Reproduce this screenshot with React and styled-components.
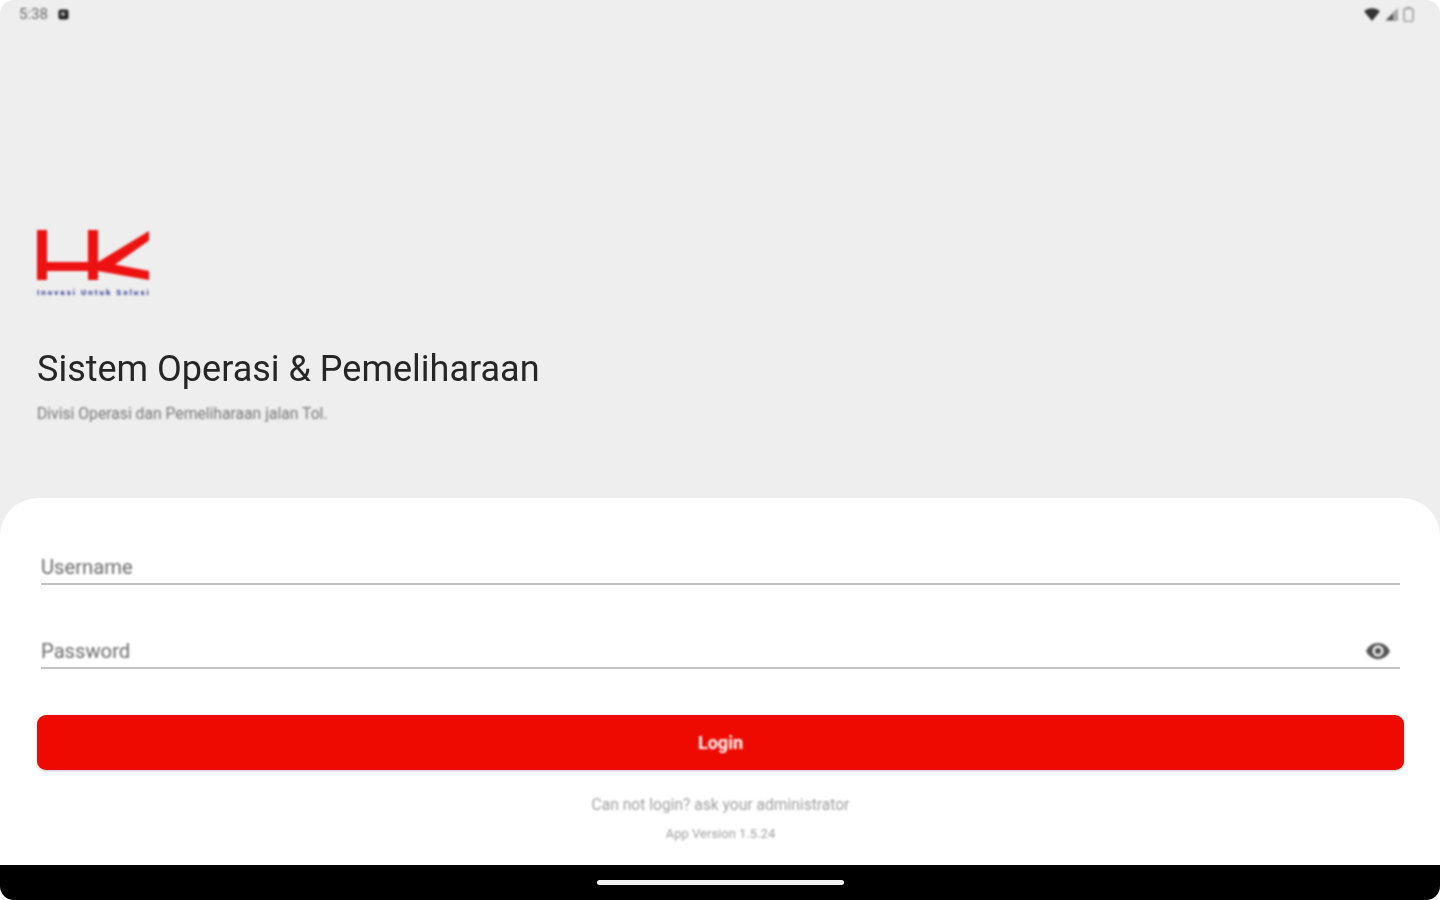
import * as React from "react";
import styled, { createGlobalStyle } from "styled-components";

const GlobalStyle = createGlobalStyle`
  html, body {
    margin: 0;
    padding: 0;
    background: #ffffff;
  }
`;

const Screen = styled.div`
  width: 1440px;
  height: 900px;
  display: flex;
  flex-direction: column;
  overflow: hidden;
  border-radius: 14px;
  background: #eeeeee;
  font-family: Roboto, "Liberation Sans", sans-serif;
`;

const StatusBar = styled.div`
  height: 28px;
  flex-shrink: 0;
  display: flex;
  align-items: center;
  justify-content: space-between;
  padding: 0 26px 0 19px;
  filter: blur(0.8px);
`;

const StatusGroup = styled.div`
  display: flex;
  align-items: center;
  gap: ${({ gap }) => gap}px;
`;

const Clock = styled.span`
  font-size: 15px;
  color: #666666;
`;

const Header = styled.header`
  flex: 1;
  display: flex;
  flex-direction: column;
  align-items: flex-start;
  padding: 201px 37px 0;
`;

const Logo = styled.div`
  width: 114px;
  display: flex;
  flex-direction: column;
  filter: blur(0.8px);
`;

const Tagline = styled.span`
  margin-top: 7px;
  font-size: 8px;
  line-height: 10px;
  font-weight: 700;
  letter-spacing: 2.02px;
  white-space: nowrap;
  color: #2a2f8f;
`;

const Title = styled.h1`
  margin: 50px 0 0;
  font-size: 36px;
  line-height: 42px;
  font-weight: 400;
  color: #262626;
  filter: blur(0.7px);
`;

const Subtitle = styled.p`
  margin: 15px 0 0;
  font-size: 15.7px;
  line-height: 18px;
  color: #777777;
  filter: blur(0.8px);
`;

const Sheet = styled.main`
  height: 367px;
  flex-shrink: 0;
  box-sizing: border-box;
  display: flex;
  flex-direction: column;
  padding: 43px 36px 0 37px;
  background: #ffffff;
  border-radius: 38px 38px 0 0;
`;

const Field = styled.div`
  height: 44px;
  margin: 0 4px ${({ last }) => (last ? 46 : 40)}px;
  box-sizing: border-box;
  display: flex;
  align-items: flex-end;
  justify-content: space-between;
  padding: 0 9px 4px 0;
  border-bottom: 2px solid #c4c4c4;
`;

const FieldLabel = styled.span`
  font-size: 20.2px;
  line-height: 24px;
  color: #6a6a6a;
  filter: blur(0.8px);
`;

const EyeIcon = styled.svg`
  width: 26px;
  height: 26px;
  margin-bottom: -1px;
  fill: #555555;
  filter: blur(0.8px);
`;

const LoginButton = styled.button`
  height: 55px;
  flex-shrink: 0;
  border: 0;
  border-radius: 9px;
  background: #ee0a00;
  color: #ffffff;
  font-family: inherit;
  font-size: 18px;
  font-weight: 700;
  box-shadow: 0 1px 3px rgba(0, 0, 0, 0.25);
`;

const ButtonText = styled.span`
  display: block;
  filter: blur(0.8px);
`;

const Note = styled.p`
  margin: ${({ top }) => top}px 0 0;
  text-align: center;
  font-size: ${({ size }) => size}px;
  line-height: 18px;
  color: #a0a0a0;
  filter: blur(0.8px);
`;

const NavBar = styled.nav`
  height: 35px;
  flex-shrink: 0;
  display: flex;
  justify-content: center;
  padding-top: 15px;
  box-sizing: border-box;
  background: #000000;
`;

const HomeIndicator = styled.div`
  width: 247px;
  height: 5px;
  border-radius: 3px;
  background: #f2f2f2;
`;

const App = () => (
  <>
    <GlobalStyle />
    <Screen>
      <StatusBar>
        <StatusGroup gap={10}>
          <Clock>5:38</Clock>
          <svg width="11" height="11" viewBox="0 0 11 11">
            <rect x="0.5" y="0.5" width="10" height="10" rx="2" fill="#222222" />
            <rect x="3" y="3" width="4" height="4" fill="#999999" />
          </svg>
        </StatusGroup>
        <StatusGroup gap={5}>
          <svg width="16" height="13" viewBox="0 0 16 13">
            <path d="M0 3.2C4.5-.8 11.5-.8 16 3.2L8 13z" fill="#333333" />
          </svg>
          <svg width="13" height="13" viewBox="0 0 13 13">
            <path d="M12.5 .5V12.5H.5z" fill="#555555" />
            <path d="M12.5 .5V12.5H8V5z" fill="#aaaaaa" />
          </svg>
          <svg width="11" height="15" viewBox="0 0 11 15">
            <rect x="1" y="1.5" width="9" height="13" rx="2" fill="none" stroke="#999999" strokeWidth="1.5" />
            <rect x="3.5" y="0" width="4" height="2" fill="#999999" />
          </svg>
        </StatusGroup>
      </StatusBar>
      <Header>
        <Logo>
          <svg width="114" height="52" viewBox="0 0 114 52">
            <path
              d="M0 1H10V33H51V1H61V33L112 2V11.5L78 35.5L112 42V51L61 42V51H51V42H10V51H0z"
              fill="#ee1111"
            />
          </svg>
          <Tagline>Inovasi Untuk Solusi</Tagline>
        </Logo>
        <Title>Sistem Operasi &amp; Pemeliharaan</Title>
        <Subtitle>Divisi Operasi dan Pemeliharaan jalan Tol.</Subtitle>
      </Header>
      <Sheet>
        <Field>
          <FieldLabel>Username</FieldLabel>
        </Field>
        <Field last>
          <FieldLabel>Password</FieldLabel>
          <EyeIcon viewBox="0 0 24 24">
            <path d="M12 4.5C7 4.5 2.7 7.6 1 12c1.7 4.4 6 7.5 11 7.5s9.3-3.1 11-7.5c-1.7-4.4-6-7.5-11-7.5zM12 17c-2.8 0-5-2.2-5-5s2.2-5 5-5 5 2.2 5 5-2.2 5-5 5zm0-8c-1.7 0-3 1.3-3 3s1.3 3 3 3 3-1.3 3-3-1.3-3-3-3z" />
          </EyeIcon>
        </Field>
        <LoginButton type="button">
          <ButtonText>Login</ButtonText>
        </LoginButton>
        <Note size={15.6} top={26}>
          Can not login? ask your administrator
        </Note>
        <Note size={13} top={11}>
          App Version 1.5.24
        </Note>
      </Sheet>
      <NavBar>
        <HomeIndicator />
      </NavBar>
    </Screen>
  </>
);

export default App;
